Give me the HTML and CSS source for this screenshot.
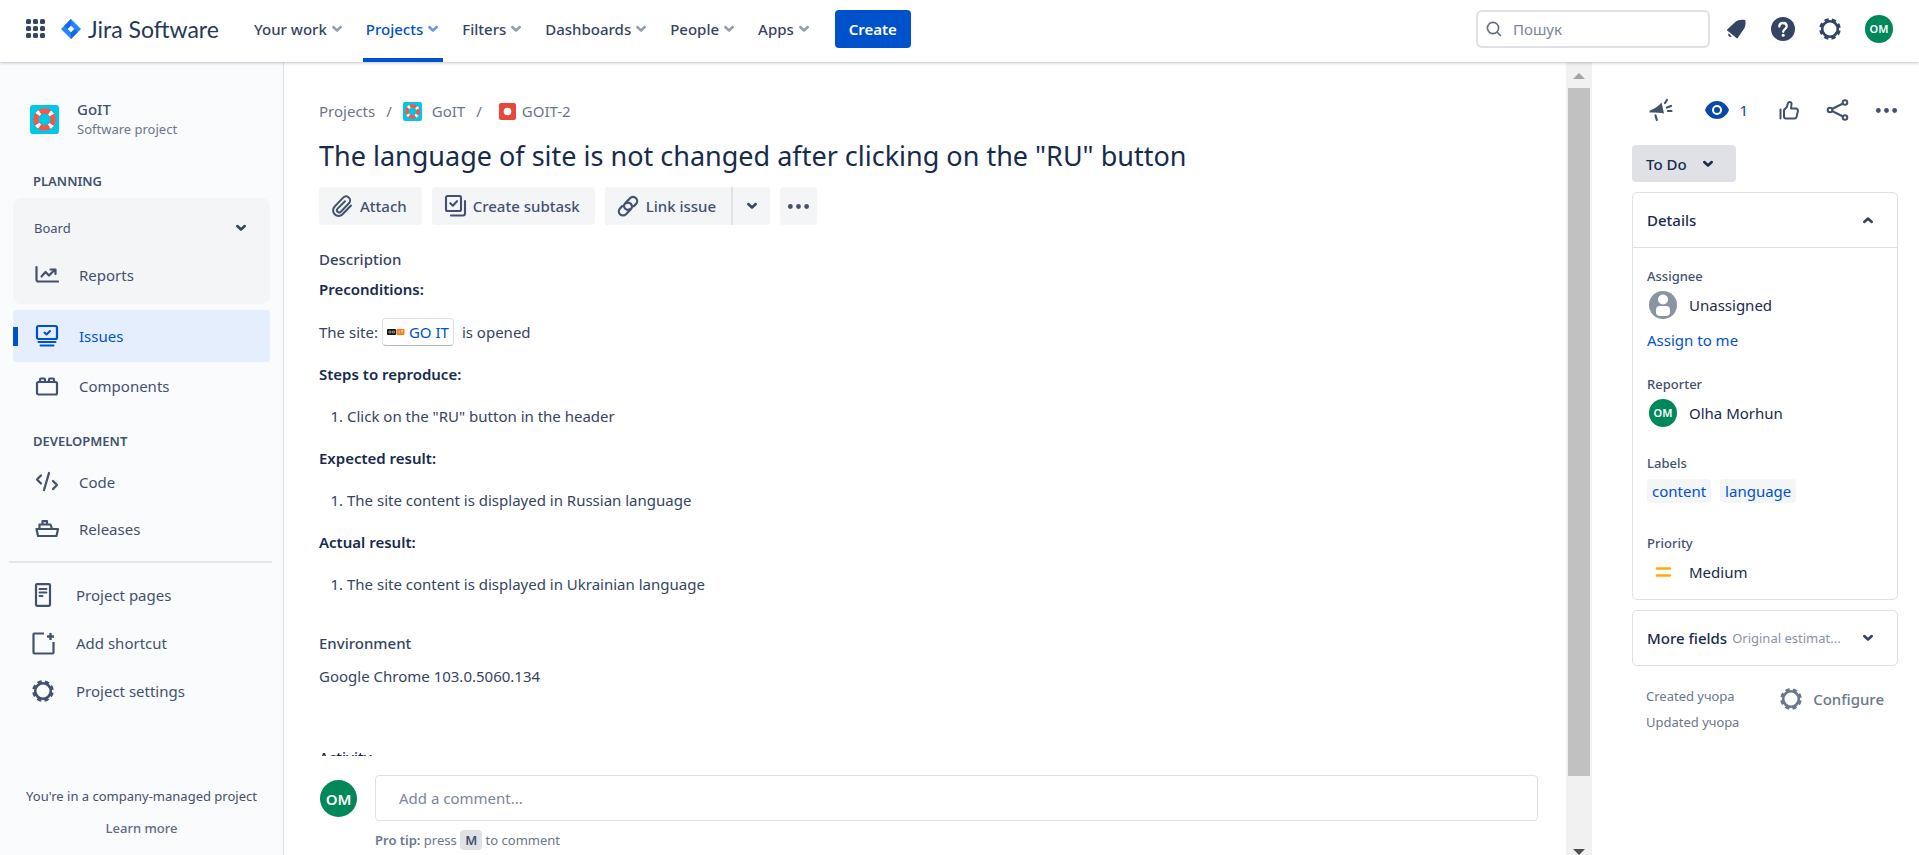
FILE: index.html
```html
<!DOCTYPE html>
<html lang="uk">
<head>
<meta charset="utf-8">
<title>GOIT-2 - Jira Software</title>
<link rel="stylesheet" href="styles.css">
</head>
<body>
<svg class="defs" aria-hidden="true">
  <symbol id="chev" viewBox="0 0 12 12"><path d="M2.800 4.300 6 7.300 9.200 4.300" fill="none" stroke="currentColor" stroke-width="2.200" stroke-linecap="round" stroke-linejoin="round"/></symbol>
  <symbol id="gear" viewBox="0 0 24 24"><g fill="none" stroke="currentColor"><circle cx="12" cy="12" r="7.800" stroke-width="2.600"/><circle cx="12" cy="12" r="9.300" stroke-width="3" stroke-dasharray="4.200 3.104" stroke-dashoffset="-1.552"/></g></symbol>
  <symbol id="dots" viewBox="0 0 24 24"><g fill="currentColor"><circle cx="3.500" cy="12" r="2.500"/><circle cx="12" cy="12" r="2.500"/><circle cx="20.500" cy="12" r="2.500"/></g></symbol>
  <symbol id="buoy" viewBox="0 0 28 28"><rect width="28" height="28" rx="3" fill="#00c7e5"/><circle cx="14" cy="14" r="8.300" fill="none" stroke="#ff5242" stroke-width="4.800"/><circle cx="14" cy="14" r="8.300" fill="none" stroke="#fff" stroke-width="4.800" stroke-dasharray="3.200 9.838" stroke-dashoffset="-4.919"/></symbol>
</svg>

<header class="topbar">
  <button class="plain switcher" aria-label="Switch apps">
    <svg width="20" height="20" viewBox="0 0 20 20" fill="currentColor"><rect x="0" y="0" width="5" height="5" rx="1.500"/><rect x="7" y="0" width="5" height="5" rx="1.500"/><rect x="14" y="0" width="5" height="5" rx="1.500"/><rect x="0" y="7" width="5" height="5" rx="1.500"/><rect x="7" y="7" width="5" height="5" rx="1.500"/><rect x="14" y="7" width="5" height="5" rx="1.500"/><rect x="0" y="14" width="5" height="5" rx="1.500"/><rect x="7" y="14" width="5" height="5" rx="1.500"/><rect x="14" y="14" width="5" height="5" rx="1.500"/></svg>
  </button>
  <a class="logo" href="#">
    <svg width="20" height="20" viewBox="0 0 20 20"><path d="M10 0 20 10 10 20 0 10z" fill="#2684ff"/><path d="M10 0v6.500L6.500 10 3.300 6.700zM10 20v-6.500l3.500-3.500 3.200 3.300z" fill="#1467e6"/><path d="m10 6.700 3.300 3.300-3.300 3.300L6.700 10z" fill="#fff"/></svg>
    <span>Jira Software</span>
  </a>
  <nav class="mainnav">
    <button class="plain navitem">Your work<svg class="chev"><use href="#chev"/></svg></button>
    <button class="plain navitem active">Projects<svg class="chev"><use href="#chev"/></svg></button>
    <button class="plain navitem">Filters<svg class="chev"><use href="#chev"/></svg></button>
    <button class="plain navitem">Dashboards<svg class="chev"><use href="#chev"/></svg></button>
    <button class="plain navitem">People<svg class="chev"><use href="#chev"/></svg></button>
    <button class="plain navitem">Apps<svg class="chev"><use href="#chev"/></svg></button>
  </nav>
  <button class="create">Create</button>
  <label class="search">
    <svg width="16" height="16" viewBox="0 0 16 16" fill="none" stroke="currentColor" stroke-width="1.600" stroke-linecap="round"><circle cx="7" cy="7" r="5.600"/><path d="m11.200 11.200 3.300 3.300"/></svg>
    <input type="text" placeholder="Пошук" aria-label="Пошук">
  </label>
  <div class="tools">
    <button class="plain" aria-label="Notifications"><svg width="24" height="24" viewBox="0 0 24 24" fill="currentColor"><path d="M3.200 12.600 11 5.200c3-2.600 6.400-2.800 10.300-2.300.6 4 .2 7.400-2.300 10.300l-5.300 7.900c-.3.400-.7.400-1 .1L3.200 13.600c-.3-.3-.3-.7 0-1z"/><path d="M4.600 16.200l3.200 3.200a2.300 2.300 0 0 1-3.200-3.200z"/></svg></button>
    <button class="plain" aria-label="Help"><svg width="24" height="24" viewBox="0 0 24 24"><circle cx="12" cy="12" r="12" fill="currentColor"/><path d="M8.300 9.500c0-2.200 1.600-3.500 3.700-3.500s3.700 1.300 3.700 3.300c0 2.900-3.500 2.700-3.500 5.500" fill="none" stroke="#fff" stroke-width="2.300" stroke-linecap="round"/><circle cx="12.200" cy="18.200" r="1.500" fill="#fff"/></svg></button>
    <button class="plain" aria-label="Settings"><svg width="24" height="24"><use href="#gear"/></svg></button>
    <button class="plain avatar" aria-label="Profile">OM</button>
  </div>
</header>

<div class="body">
  <aside class="sidebar">
    <div class="project">
      <svg width="29" height="29"><use href="#buoy"/></svg>
      <div><div class="pname">GoIT</div><div class="ptype">Software project</div></div>
    </div>
    <h2>PLANNING</h2>
    <div class="group">
      <button class="plain board">Board<svg class="chev dark"><use href="#chev"/></svg></button>
      <a href="#" class="side"><svg width="24" height="24" viewBox="0 0 24 24" fill="none" stroke="currentColor" stroke-width="2.200" stroke-linecap="round" stroke-linejoin="round"><path d="M1.500 4v12.500a2 2 0 0 0 2 2H23"/><path d="m6.500 13.500 4-4.500 3.500 3.500 6-6M15.500 6.500H20.500V11"/></svg>Reports</a>
    </div>
    <a href="#" class="side selected"><svg width="24" height="24" viewBox="0 0 24 24" fill="none" stroke="currentColor" stroke-width="2" stroke-linecap="round" stroke-linejoin="round"><rect x="2" y="2" width="20" height="13" rx="1.500" stroke-width="2.200"/><path d="m9.500 8.500 2 2 3.500-3.500" /><path d="M3.500 18h17M5.500 21.500h13"/></svg>Issues</a>
    <a href="#" class="side"><svg width="24" height="24" viewBox="0 0 24 24" fill="none" stroke="currentColor" stroke-width="2.200" stroke-linejoin="round"><rect x="2" y="8" width="20" height="12.500" rx="1.500"/><path d="M5 8V5.500a1 1 0 0 1 1-1h3a1 1 0 0 1 1 1V8M14 8V5.500a1 1 0 0 1 1-1h3a1 1 0 0 1 1 1V8"/></svg>Components</a>
    <h2 class="second">DEVELOPMENT</h2>
    <a href="#" class="side"><svg width="24" height="24" viewBox="0 0 24 24" fill="none" stroke="currentColor" stroke-width="2.300" stroke-linecap="round" stroke-linejoin="round"><path d="M6 5.500 2 9.500 6 13.500M14 3 9 20M18 11l4 4-4 4"/></svg>Code</a>
    <a href="#" class="side"><svg width="24" height="24" viewBox="0 0 24 24" fill="none" stroke="currentColor" stroke-width="2.200" stroke-linejoin="round"><path d="M1.500 12H23l-1.500 7H3zM4.500 12V7.500h11L17 12M7.500 7.500V4.200h4.500v3.300"/></svg>Releases</a>
    <hr>
    <a href="#" class="side low"><svg width="24" height="24" viewBox="0 0 24 24" fill="none" stroke="currentColor" stroke-width="2.200" stroke-linejoin="round" stroke-linecap="round"><rect x="5" y="1.200" width="14" height="21.600" rx="1"/><path d="M8.500 6h7M8.500 9.500h7M8.500 13h3" stroke-width="1.900"/></svg>Project pages</a>
    <a href="#" class="side low"><svg width="24" height="24" viewBox="0 0 24 24" fill="none" stroke="currentColor" stroke-width="2.200" stroke-linejoin="round"><path d="M13 2.500H3.500a1 1 0 0 0-1 1v18a1 1 0 0 0 1 1h18a1 1 0 0 0 1-1V11"/><path d="M19.500 2v7M16 5.500h7" stroke-width="2.400"/></svg>Add shortcut</a>
    <a href="#" class="side low"><svg width="24" height="24"><use href="#gear"/></svg>Project settings</a>
    <div class="sidefoot"><p>You're in a company-managed project</p><a href="#">Learn more</a></div>
  </aside>

  <main class="issue">
    <div class="scroll">
      <nav class="crumbs">
        <a href="#">Projects</a><span class="sep">/</span>
        <a href="#" class="crumb-project"><svg width="19" height="19"><use href="#buoy"/></svg>GoIT</a><span class="sep">/</span>
        <a href="#" class="crumb-issue"><svg width="17" height="17" viewBox="0 0 17 17"><rect width="17" height="17" rx="2" fill="#e5493a"/><circle cx="8.500" cy="8.500" r="3.800" fill="#fff"/></svg>GOIT-2</a>
      </nav>
      <h1>The language of site is not changed after clicking on the "RU" button</h1>
      <div class="actions">
        <button class="act"><svg width="24" height="24" viewBox="0 0 24 24" fill="none" stroke="currentColor" stroke-width="2" stroke-linecap="round"><path d="M21 11.500 12.500 20.300a5.400 5.400 0 0 1-7.800 0 5.600 5.600 0 0 1 0-7.800L13.200 3.600a3.900 3.900 0 0 1 5.700 0 4.100 4.100 0 0 1 0 5.700L10.800 17.800a2.200 2.200 0 0 1-3.200-3.200L15 7.200"/></svg>Attach</button>
        <button class="act"><svg width="24" height="24" viewBox="0 0 24 24" fill="none" stroke="currentColor" stroke-width="2.100" stroke-linecap="round" stroke-linejoin="round"><rect x="3" y="2" width="15" height="15" rx="1.500"/><path d="m7.300 9.200 2.500 2.500 4.200-4.500M22 7v12.500a2 2 0 0 1-2 2H8"/></svg>Create subtask</button>
        <div class="split">
          <button class="act"><svg width="24" height="24" viewBox="0 0 24 24" fill="none" stroke="currentColor" stroke-width="2.200" stroke-linecap="round"><path d="M13.800 15.200c-1.700.9-3.500.6-4.800-.7a3.800 3.800 0 0 1 .2-5.300l4.800-5a4.200 4.200 0 0 1 6 0 4.200 4.200 0 0 1 0 5.800l-2.200 2.300"/><path d="M10.200 9.200c1.700-.9 3.500-.6 4.800.7a3.800 3.800 0 0 1-.2 5.300l-4.800 5a4.200 4.200 0 0 1-6 0 4.200 4.200 0 0 1 0-5.800l2.200-2.300"/></svg>Link issue</button>
          <button class="act icon" aria-label="More link options"><svg class="chev dark"><use href="#chev"/></svg></button>
        </div>
        <button class="act icon" aria-label="More actions"><svg width="23" height="23"><use href="#dots"/></svg></button>
      </div>
      <h3>Description</h3>
      <div class="doc">
        <p><strong>Preconditions:</strong></p>
        <p class="site">The site: <a href="#" class="card-link"><svg width="18" height="8" viewBox="0 0 18 8"><rect y="1" width="9" height="6" rx="1" fill="#111"/><rect x="9.500" y="1" width="8" height="6" rx="1" fill="#ff7a1a"/><path d="M2 3h2v2H2zM5.500 3h2v2h-2z" stroke="#bbb" stroke-width=".7" fill="none"/><path d="M12 2.800v2.400M14 2.800h2M15 2.800v2.400" stroke="#ffd9bb" stroke-width=".9"/></svg>GO IT</a> is opened</p>
        <p><strong>Steps to reproduce:</strong></p>
        <ol><li>Click on the "RU" button in the header</li></ol>
        <p><strong>Expected result:</strong></p>
        <ol><li>The site content is displayed in Russian language</li></ol>
        <p><strong>Actual result:</strong></p>
        <ol><li>The site content is displayed in Ukrainian language</li></ol>
      </div>
      <h3 class="env">Environment</h3>
      <p class="envtext">Google Chrome 103.0.5060.134</p>
      <h3 class="activity">Activity</h3>
    </div>
    <div class="comment">
      <span class="avatar big">OM</span>
      <div class="commentbox">
        <input type="text" placeholder="Add a comment..." aria-label="Add a comment">
        <p class="tip"><strong>Pro tip:</strong> press <kbd>M</kbd> to comment</p>
      </div>
    </div>
  </main>

  <div class="scrollbar" aria-hidden="true">
    <svg width="12" height="6" viewBox="0 0 12 6"><path d="M6 0l6 6H0z" fill="#a3a3a3"/></svg>
    <div class="rail"><div class="thumb"></div></div>
    <svg width="12" height="6" viewBox="0 0 12 6"><path d="M6 6l6-6H0z" fill="#505050"/></svg>
  </div>

  <aside class="panel">
    <div class="panelicons">
      <button class="plain" aria-label="Give feedback"><svg width="24" height="24" viewBox="0 0 24 24"><path d="M12.500 4.500c-2 2.800-6 5.600-11.500 8-.7.400-.7 1.800 0 2 5.500 0 11 .2 14 1z" fill="currentColor"/><path d="M6.500 17.500l1.300 4.500M16 5l2-3M18 9.500l4-1.600M19 13h3.500" fill="none" stroke="currentColor" stroke-width="2.200" stroke-linecap="round"/></svg></button>
      <button class="plain watch" aria-label="Watchers 1"><svg width="24" height="24" viewBox="0 0 24 24"><path d="M12 3c5 0 9.500 3.300 11.600 8a2 2 0 0 1 0 2c-2.100 4.700-6.600 8-11.600 8S2.500 17.700.4 13a2 2 0 0 1 0-2C2.500 6.300 7 3 12 3z" fill="currentColor"/><circle cx="12" cy="12" r="4" fill="none" stroke="#fff" stroke-width="2"/></svg>1</button>
      <button class="plain" aria-label="Vote"><svg width="24" height="24" viewBox="0 0 24 24" fill="none" stroke="currentColor" stroke-width="2" stroke-linecap="round" stroke-linejoin="round"><path d="M3.500 11.500v9M7 12v6.500a2 2 0 0 0 2 2h8.500a2 2 0 0 0 2-1.500l1.400-6a2 2 0 0 0-1.900-2.500h-5l.6-5A1.900 1.900 0 0 0 11 5L9.800 9z"/></svg></button>
      <button class="plain" aria-label="Share"><svg width="24" height="24" viewBox="0 0 24 24" fill="none" stroke="currentColor" stroke-width="2"><circle cx="4" cy="12" r="2.300"/><circle cx="19" cy="4.500" r="2.300"/><circle cx="19" cy="19.500" r="2.300"/><path d="m6 11 11-5.500M6 13l11 5.500"/></svg></button>
      <button class="plain" aria-label="Actions"><svg width="23" height="23"><use href="#dots"/></svg></button>
    </div>
    <button class="status">To Do<svg class="chev"><use href="#chev"/></svg></button>
    <section class="card details">
      <button class="plain cardhead">Details<svg class="chev dark up"><use href="#chev"/></svg></button>
      <div class="fields">
        <div class="field"><h4>Assignee</h4>
          <div class="person"><svg width="28" height="28" viewBox="0 0 28 28"><circle cx="14" cy="14" r="14" fill="#8993a4"/><circle cx="14" cy="8.500" r="5" fill="#fff"/><rect x="7" y="15" width="14" height="10" rx="4" fill="#fff"/></svg>Unassigned</div>
          <a href="#" class="assign">Assign to me</a></div>
        <div class="field"><h4>Reporter</h4><div class="person"><span class="avatar">OM</span>Olha Morhun</div></div>
        <div class="field"><h4>Labels</h4><div class="labels"><a href="#">content</a><a href="#">language</a></div></div>
        <div class="field"><h4>Priority</h4><div class="person"><svg width="28" height="28" viewBox="0 0 28 28"><path d="M8 10.500h13M8 17.500h13" stroke="#ffab00" stroke-width="2.400" stroke-linecap="round"/></svg>Medium</div></div>
      </div>
    </section>
    <section class="card">
      <button class="plain cardhead more"><span>More fields</span><small>Original estimat...</small><svg class="chev dark"><use href="#chev"/></svg></button>
    </section>
    <div class="meta">
      <div><p>Created учора</p><p>Updated учора</p></div>
      <button class="plain configure"><svg width="24" height="24"><use href="#gear"/></svg>Configure</button>
    </div>
  </aside>
</div>
</body>
</html>
```
FILE: styles.css
```css
* { box-sizing: border-box; }
html, body { height: 100%; }
body {
  margin: 0;
  display: flex;
  flex-direction: column;
  overflow: hidden;
  background: #fff;
  color: #344563;
  font: 15px/24px "Noto Sans", "Open Sans", sans-serif;
}
h1, h2, h3, h4, p, ol { margin: 0; }
a { color: inherit; text-decoration: none; }
svg { flex: none; display: block; }
button, input { font: inherit; color: inherit; }
.plain { background: none; border: 0; padding: 0; display: flex; align-items: center; }
.defs { position: absolute; width: 0; height: 0; }
.chev { width: 14px; height: 14px; }
.dark { color: #344563; }
.up { transform: rotate(180deg); }

.avatar {
  width: 28px; height: 28px; border-radius: 50%;
  background: #00875a; color: #fff;
  font-size: 11px; font-weight: 600;
  display: flex; align-items: center; justify-content: center; flex: none;
}
.avatar.big { width: 37px; height: 37px; font-size: 15px; }

/* top bar */
.topbar {
  display: flex; align-items: center; flex: none;
  height: 62px; padding: 0 26px 4px;
  box-shadow: 0 1px 3px rgba(9, 30, 66, .25);
  position: relative; z-index: 1; background: #fff;
}
.switcher { color: #344563; margin-right: 15px; }
.logo { display: flex; align-items: center; gap: 7px; font: 400 23px/28px Lato, sans-serif; color: #253858; width: 158px; white-space: nowrap; }
.mainnav { display: flex; align-self: stretch; gap: 16px; margin: 0 21px 0 32px; }
.navitem { height: 62px; padding: 0 3px 4px; font-weight: 500; gap: 3px; white-space: nowrap; }
.navitem .chev { color: #97a0af; }
.navitem.active { color: #0052cc; border-bottom: 4px solid #0052cc; padding-bottom: 0; }
.navitem.active .chev { color: #6b9bea; }
.create { height: 38px; width: 76px; border: 0; border-radius: 4px; background: #0052cc; color: #fff; font-weight: 600; }
.search {
  margin-left: auto; width: 234px; height: 38px; display: flex; align-items: center; gap: 11px;
  border: 2px solid #dfe1e6; border-radius: 6px; padding: 0 8px; color: #5e6c84;
}
.search input { flex: 1; min-width: 0; border: 0; padding: 0; background: none; outline: 0; }
input::placeholder { color: #7a869a; opacity: 1; }
.tools { display: flex; align-items: center; gap: 23px; margin-left: 14px; color: #344563; }

.body { flex: 1; min-height: 0; display: flex; }

/* project sidebar */
.sidebar {
  flex: none; width: 284px; background: #fafbfc; border-right: 1px solid #dfe1e6;
  padding: 37px 13px 17px; display: flex; flex-direction: column; color: #42526e;
}
.project { display: flex; align-items: center; gap: 18px; padding-left: 17px; line-height: 20px; }
.pname { font-weight: 500; }
.ptype { font-size: 13px; color: #6b778c; }
.sidebar h2 { font-size: 13px; line-height: 20px; font-weight: 600; margin: 32px 0 7px 20px; }
.sidebar h2.second { margin-top: 22px; }
.group { background: #f4f5f7; border-radius: 8px; padding: 6px 0; }
.board { width: 100%; height: 47px; padding: 0 22px 0 21px; font-size: 13px; justify-content: space-between; }
.side { display: flex; align-items: center; gap: 20px; height: 47px; padding-left: 22px; border-radius: 4px; flex: none; }
.side.selected {
  height: 52px; margin-top: 6px; color: #0052cc;
  background: linear-gradient(#0052cc, #0052cc) 0 center / 5px 19px no-repeat #e4eefc;
}
.side.low { height: 48px; padding-left: 18px; gap: 21px; }
.sidebar hr { width: 263px; height: 2px; border: 0; background: #e4e6ea; margin: 9px 0 8px -4px; flex: none; }
.sidefoot { margin-top: auto; text-align: center; font-size: 13px; line-height: 20px; white-space: nowrap; }
.sidefoot a { display: block; margin-top: 12px; font-weight: 500; color: #5e6c84; }

/* issue */
.issue { flex: 1; min-width: 0; display: flex; flex-direction: column; }
.scroll { flex: 1; min-height: 0; overflow: hidden; padding: 36px 28px 0 35px; }
.crumbs { display: flex; align-items: center; line-height: 26px; color: #6b778c; }
.crumbs a { display: flex; align-items: center; }
.sep { margin: 0 11px; }
.crumb-project { gap: 10px; }
.crumb-issue { gap: 6px; margin-left: 6px; }
h1 { margin-top: 16px; font-size: 27px; line-height: 32px; font-weight: 400; color: #172b4d; }
.actions { display: flex; gap: 10px; margin-top: 15px; }
.act {
  height: 38px; border: 0; border-radius: 4px; background: #f4f5f7; color: #42526e;
  font-weight: 500; padding: 0 15px 0 11px; display: flex; align-items: center; gap: 6px; white-space: nowrap;
}
.act.icon { width: 37px; padding: 0; justify-content: center; }
.split { display: flex; gap: 2px; background: #dfe1e6; border-radius: 4px; }
.split .act:first-child { border-radius: 4px 0 0 4px; }
.split .act:last-child { border-radius: 0 4px 4px 0; }
h3 { margin-top: 22px; font-size: 15px; font-weight: 500; color: #344563; }
.doc { margin-top: 6px; display: grid; gap: 18px; color: #344563; }
strong { font-weight: 600; }
.doc strong { color: #172b4d; }
.doc ol { padding-left: 28px; }
.site { display: flex; align-items: center; gap: 4px; height: 25px; }
.card-link {
  display: flex; align-items: center; gap: 4px; height: 28px; margin-right: 4px; padding: 0 4px;
  border: 1px solid #dfe1e6; border-bottom-color: #b3bac5; border-radius: 4px; color: #0052cc;
}
h3.env { margin-top: 35px; }
.envtext { margin-top: 9px; }
h3.activity { margin-top: 57px; color: #172b4d; }
.comment { flex: none; display: flex; gap: 18px; padding: 19px 28px 3px 36px; background: #fff; }
.comment .avatar { margin-top: 5px; }
.commentbox { flex: 1; }
.commentbox input { display: block; width: 100%; height: 46px; border: 1px solid #dfe1e6; border-radius: 4px; padding: 0 23px; outline: 0; }
.tip { margin-top: 7px; font-size: 13px; color: #6b778c; }
kbd { font: inherit; font-weight: 600; background: #dfe1e6; color: #42526e; border-radius: 4px; padding: 1px 5px; }

.scrollbar { flex: none; width: 26px; background: #f1f1f1; padding: 11px 2px 0; display: flex; flex-direction: column; align-items: center; gap: 9px; }
.rail { flex: 1; width: 100%; }
.thumb { height: 91.5%; background: #c1c1c1; }

/* details panel */
.panel { flex: none; width: 327px; padding: 35px 21px 0 40px; display: flex; flex-direction: column; }
.panelicons { display: flex; align-items: center; justify-content: flex-end; height: 26px; gap: 25px; color: #42526e; }
.watch { color: #0747a6; gap: 10px; margin: 0 4px 0 7px; }
.status {
  align-self: flex-start; margin-top: 22px; height: 37px; border: 0; border-radius: 4px; background: #dfe1e6; color: #172b4d;
  font-weight: 500; padding: 0 21px 0 14px; display: flex; align-items: center; gap: 14px;
}
.card { border: 1px solid #dfe1e6; border-radius: 5px; margin-top: 10px; }
.cardhead { width: 100%; height: 54px; padding: 0 22px 0 14px; justify-content: space-between; font-weight: 500; color: #172b4d; }
.details .cardhead { height: 55px; border-bottom: 1px solid #dfe1e6; }
.fields { padding: 18px 14px 11px; display: grid; gap: 24px; }
h4 { font-size: 13px; line-height: 20px; font-weight: 500; color: #42526e; }
.person { display: flex; align-items: center; gap: 12px; height: 32px; margin-top: 3px; padding-left: 2px; color: #172b4d; }
.assign { display: block; margin: 7px 0 -2px; color: #0052cc; }
.labels { display: flex; gap: 9px; margin: 6px 0; }
.labels a { background: #f4f5f7; border-radius: 4px; padding: 0 5px; color: #0052cc; }
.more { gap: 5px; }
.more span, .more small { white-space: nowrap; }
.more small { margin-right: auto; font-size: 13px; font-weight: 400; color: #8993a4; }
.meta { display: flex; justify-content: space-between; align-items: flex-start; margin-top: 17px; padding: 0 14px; font-size: 13px; line-height: 26px; color: #6b778c; }
.configure { height: 32px; gap: 10px; font-size: 15px; font-weight: 500; }
```
